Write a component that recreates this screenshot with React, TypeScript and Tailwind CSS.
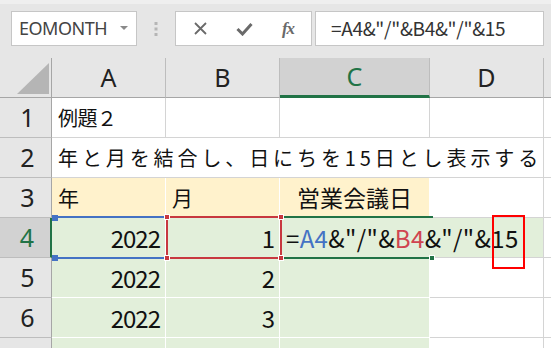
import React from 'react';

const cellFont = "font-['Noto_Sans_CJK_JP',sans-serif]";
const headFont = "font-['Noto_Sans',sans-serif]";

const colWidths = 'grid-cols-[52px_114px_114px_150px_114px_1fr]';

const ColHead = ({ label, active }: { label: string; active?: boolean }) => (
    <div
        className={`h-[40px] flex items-center justify-center border-r border-[#bdbdbd] text-[25px] ${headFont} ${
            active ? 'bg-[#d2d2d2] text-[#217346] border-b-[3px] border-b-[#217346]' : 'bg-[#e6e6e6] text-[#222] border-b border-b-[#a6a6a6]'
        }`}
    >
        {label}
    </div>
);

const RowHead = ({ n, active }: { n?: number; active?: boolean }) => (
    <div
        className={`h-[40px] flex items-center justify-center pl-[4px] border-b border-[#bdbdbd] text-[25px] ${headFont} ${
            active ? 'bg-[#d2d2d2] text-[#217346] border-r-2 border-r-[#217346]' : 'bg-[#e6e6e6] text-[#222] border-r border-r-[#a6a6a6]'
        }`}
    >
        {n}
    </div>
);

type Tone = 'white' | 'yellow' | 'green';

const Cell = ({
    tone = 'white',
    align = 'left',
    noRight,
    className = '',
    children
}: {
    tone?: Tone;
    align?: 'left' | 'right' | 'center';
    noRight?: boolean;
    className?: string;
    children?: React.ReactNode;
}) => {
    const bg =
        tone === 'yellow'
            ? 'bg-[#fff2cc] border-white'
            : tone === 'green'
            ? 'bg-[#e2efda] border-white'
            : 'bg-white border-[#d4d4d4]';
    const justify = align === 'right' ? 'justify-end pr-[5px]' : align === 'center' ? 'justify-center' : 'justify-start pl-[6px]';
    return (
        <div
            className={`h-[40px] flex items-center border-b ${noRight ? '' : 'border-r'} ${bg} ${justify} text-[#111] ${cellFont} ${className}`}
        >
            {children}
        </div>
    );
};

const Num = ({ children }: { children: React.ReactNode }) => (
    <span className="text-[24px] tracking-[-1px] leading-none">{children}</span>
);

const Toolbar = () => (
    <div className="h-[58px] bg-[#e6e6e6] border-t-[4px] border-[#efefef] pt-[7px] flex items-start">
        <div className="ml-[11px] w-[126px] h-[35px] bg-white border border-[#c6c6c6] flex items-center pl-[7px] pr-[8px] justify-between">
            <span className={`text-[18px] tracking-[-0.5px] text-[#444] ${headFont}`}>EOMONTH</span>
            <svg width="8" height="5" viewBox="0 0 8 5">
                <polygon points="0,0 8,0 4,4" fill="#8a8a8a" />
            </svg>
        </div>
        <div className="w-[38px] h-[35px] flex items-center justify-center">
            <svg width="4" height="14" viewBox="0 0 4 14">
                <rect x="0.5" y="0" width="3" height="3" fill="#b5b5b5" />
                <rect x="0.5" y="5.5" width="3" height="3" fill="#b5b5b5" />
                <rect x="0.5" y="11" width="3" height="3" fill="#b5b5b5" />
            </svg>
        </div>
        <div className="w-[137px] h-[35px] bg-white border border-[#c6c6c6] flex items-center">
            <div className="w-[46px] flex justify-center pl-[2px]">
                <svg width="15" height="15" viewBox="0 0 15 15">
                    <path d="M2 2 L13 13 M13 2 L2 13" stroke="#6a6a6a" strokeWidth="1.8" />
                </svg>
            </div>
            <div className="w-[44px] flex justify-center">
                <svg width="17" height="14" viewBox="0 0 17 14">
                    <path d="M1.5 7 L6.5 12 L15.5 2" stroke="#6a6a6a" strokeWidth="3" fill="none" />
                </svg>
            </div>
            <div className="w-[44px] flex justify-center">
                <span className="font-['Liberation_Serif',serif] italic text-[17px] text-[#6a6a6a] font-bold tracking-[-1px]">fx</span>
            </div>
        </div>
        <div className="ml-[3px] w-[229px] h-[35px] bg-white border border-[#c6c6c6] flex items-center pl-[15px]">
            <span className={`text-[19px] text-[#333] ${cellFont} tracking-[-0.3px]`}>=A4&amp;"/"&amp;B4&amp;"/"&amp;15</span>
        </div>
    </div>
);

const Sheet = () => (
    <div className={`grid ${colWidths} auto-rows-[40px]`}>
        {/* header row */}
        <div className="h-[40px] bg-[#e6e6e6] border-r border-b border-[#a6a6a6]">
            <svg width="51" height="39" viewBox="0 0 51 39">
                <polygon points="17,36 49,36 49,5" fill="#b5b5b5" />
            </svg>
        </div>
        <ColHead label="A" />
        <ColHead label="B" />
        <ColHead label="C" active />
        <ColHead label="D" />
        <div className="h-[40px] bg-[#e6e6e6] border-b border-[#a6a6a6]" />

        {/* row 1 */}
        <RowHead n={1} />
        <Cell>
            <span className="text-[20px] tracking-[-0.5px]">例題２</span>
        </Cell>
        <Cell />
        <Cell />
        <Cell />
        <Cell noRight />

        {/* row 2 */}
        <RowHead n={2} />
        <Cell noRight className="overflow-visible relative z-10">
            <span className="text-[20px] tracking-[3.9px] whitespace-nowrap">年と月を結合し、日にちを15日とし表示する</span>
        </Cell>
        <Cell noRight />
        <Cell noRight />
        <Cell />
        <Cell noRight />

        {/* row 3 */}
        <RowHead n={3} />
        <Cell tone="yellow">
            <span className="text-[21px]">年</span>
        </Cell>
        <Cell tone="yellow">
            <span className="text-[21px]">月</span>
        </Cell>
        <Cell tone="yellow" align="center">
            <span className="text-[23px]">営業会議日</span>
        </Cell>
        <Cell />
        <Cell noRight />

        {/* row 4 */}
        <RowHead n={4} active />
        <Cell tone="green" align="right" className="bg-[#d3e2da]">
            <Num>2022</Num>
        </Cell>
        <Cell tone="green" align="right" className="bg-[#dfdbc8]">
            <Num>1</Num>
        </Cell>
        <Cell tone="green" noRight className="overflow-visible relative z-10 pl-[5px]">
            <span className="text-[24px] leading-none whitespace-nowrap tracking-[0.35px]">
                =<span className="text-[#4472c4]">A4</span>&amp;"/"&amp;<span className="text-[#d04450]">B4</span>&amp;"/"&amp;15
            </span>
        </Cell>
        <Cell tone="green" className="border-r-[#d4d4d4] border-b-[#d4d4d4]" />
        <Cell noRight />

        {/* rows 5, 6 */}
        {[2, 3].map((m, i) => (
            <React.Fragment key={m}>
                <RowHead n={5 + i} />
                <Cell tone="green" align="right">
                    <Num>2022</Num>
                </Cell>
                <Cell tone="green" align="right">
                    <Num>{m}</Num>
                </Cell>
                <Cell tone="green" />
                <Cell />
                <Cell noRight />
            </React.Fragment>
        ))}

        {/* row 7 (partial, number is below the fold) */}
        <RowHead />
        <Cell tone="green" />
        <Cell tone="green" />
        <Cell tone="green" />
        <Cell />
        <Cell noRight />
    </div>
);

const Handle = ({ className }: { className: string }) => <div className={`absolute w-[6px] h-[6px] ${className}`} />;

export default function App() {
    return (
        <div className="w-[551px] h-[348px] overflow-hidden bg-white relative">
            <Toolbar />
            <Sheet />

            {/* A4 range highlight (blue) */}
            <div className="absolute left-[52px] top-[216px] w-[115px] h-[43px] border-y-2 border-[#4472c4] z-20" />
            <Handle className="left-[52px] top-[215px] w-[4px] bg-[#4472c4] z-20" />
            <Handle className="left-[52px] top-[255px] w-[4px] bg-[#4472c4] z-20" />

            {/* C4 active cell (green) */}
            <div className="absolute left-[280px] top-[216px] w-[153px] h-[43px] border-y-2 border-l-2 border-[#217346] z-20" />
            <Handle className="left-[429px] top-[255px] bg-[#217346] border border-white z-20" />

            {/* B4 range highlight (red) */}
            <div className="absolute left-[166px] top-[216px] w-[116px] h-[43px] border-2 border-[#c8383f] z-30" />
            <Handle className="left-[164px] top-[214px] bg-[#c8383f] border border-white z-30" />
            <Handle className="left-[278px] top-[214px] bg-[#c8383f] border border-white z-30" />
            <Handle className="left-[164px] top-[255px] bg-[#c8383f] border border-white z-30" />
            <Handle className="left-[278px] top-[255px] bg-[#c8383f] border border-white z-30" />

            {/* red callout box */}
            <div className="absolute left-[492px] top-[215px] w-[33px] h-[54px] border-2 border-[#ff0000] z-40" />
        </div>
    );
}
